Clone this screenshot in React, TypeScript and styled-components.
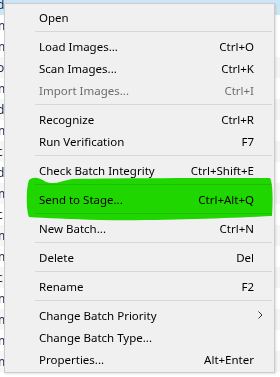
import React from "react";
import styled, { createGlobalStyle } from "styled-components";

const GlobalStyle = createGlobalStyle`
  body {
    margin: 0;
    font-family: "Noto Sans", "Open Sans", sans-serif;
    font-size: 11.5px;
  }
`;

const Page = styled.div`
  position: relative;
  width: 280px;
  height: 377px;
  overflow: hidden;
  background: #ffffff;
`;

const List = styled.div`
  display: flex;
  flex-direction: column;
  margin-top: -6px;
`;

const ListRow = styled.div<{ $tone: "selected" | "white" | "gray" }>`
  height: 21px;
  display: flex;
  align-items: center;
  color: #1a2a4a;
  background: ${(p) =>
    p.$tone === "selected" ? "#cde6f7" : p.$tone === "gray" ? "#f6f6f6" : "#ffffff"};
`;

const RowText = styled.span`
  margin-left: -6px;
  font-size: 12px;
`;

const Menu = styled.div`
  position: absolute;
  left: 4px;
  top: 3px;
  width: 271px;
  box-sizing: border-box;
  padding: 2px;
  background: #f0f0f0;
  border: 1px solid #cccccc;
  box-shadow: 1px 1px 2px rgba(0, 0, 0, 0.12);
  color: #000000;
`;

const Item = styled.div<{ $disabled?: boolean }>`
  height: 22px;
  display: grid;
  grid-template-columns: 1fr auto 18px;
  align-items: center;
  padding-left: 32px;
  color: ${(p) => (p.$disabled ? "#6d6d6d" : "#000000")};
  white-space: nowrap;
`;

const Shortcut = styled.span`
  text-align: right;
`;

const ArrowCell = styled.span`
  display: flex;
  align-items: center;
  padding-left: 4px;
`;

const Separator = styled.div`
  height: 7px;
  display: flex;
  align-items: center;
  margin-left: 28px;

  &::after {
    content: "";
    flex: 1;
    height: 1px;
    background: #d7d7d7;
  }
`;

const Marker = styled.svg`
  position: absolute;
  left: 0;
  top: 0;
  pointer-events: none;
  mix-blend-mode: multiply;
`;

type Entry =
  | { sep: true }
  | { label: string; key?: string; disabled?: boolean; sub?: boolean };

const entries: Entry[] = [
  { label: "Open" },
  { sep: true },
  { label: "Load Images...", key: "Ctrl+O" },
  { label: "Scan Images...", key: "Ctrl+K" },
  { label: "Import Images...", key: "Ctrl+I", disabled: true },
  { sep: true },
  { label: "Recognize", key: "Ctrl+R" },
  { label: "Run Verification", key: "F7" },
  { sep: true },
  { label: "Check Batch Integrity", key: "Ctrl+Shift+E" },
  { sep: true },
  { label: "Send to Stage...", key: "Ctrl+Alt+Q" },
  { sep: true },
  { label: "New Batch...", key: "Ctrl+N" },
  { sep: true },
  { label: "Delete", key: "Del" },
  { sep: true },
  { label: "Rename", key: "F2" },
  { sep: true },
  { label: "Change Batch Priority", sub: true },
  { label: "Change Batch Type..." },
  { label: "Properties...", key: "Alt+Enter" },
];

const rows: ("selected" | "white" | "gray")[] = [
  "selected", "white", "white", "gray", "white", "gray", "white", "gray", "white",
  "gray", "white", "gray", "white", "gray", "white", "gray", "white", "gray", "white",
];
const rowGlyphs = ["ld", "m", "m", "lo", "m", "ld", "m", "lc", "ld", "m", "lc", "m", "m", "lc", "m", "m", "m", "m", "m"];

export default function App() {
  return (
    <Page>
      <GlobalStyle />
      <List>
        {rows.map((tone, i) => (
          <ListRow key={i} $tone={tone}>
            <RowText>{rowGlyphs[i]}</RowText>
          </ListRow>
        ))}
      </List>
      <Menu>
        {entries.map((e, i) =>
          "sep" in e ? (
            <Separator key={i} />
          ) : (
            <Item key={i} $disabled={e.disabled}>
              <span>{e.label}</span>
              <Shortcut>{e.key}</Shortcut>
              <ArrowCell>
                {e.sub && (
                  <svg width="5" height="8" viewBox="0 0 5 8">
                    <path d="M0.5 0.5 L4 4 L0.5 7.5" fill="none" stroke="#333" strokeWidth="1" />
                  </svg>
                )}
              </ArrowCell>
            </Item>
          )
        )}
      </Menu>
      <Marker width="280" height="377" viewBox="0 0 280 377">
        <path
          d="M29 180 C34 176 40 178 46 182 C54 185 62 181 72 179 C120 178 200 178 270 178 C273 184 273 200 272 216 C230 218 160 221 100 220 C70 219 45 218 29 217 C26 210 26 188 29 180 Z"
          fill="#22e400"
        />
      </Marker>
    </Page>
  );
}
